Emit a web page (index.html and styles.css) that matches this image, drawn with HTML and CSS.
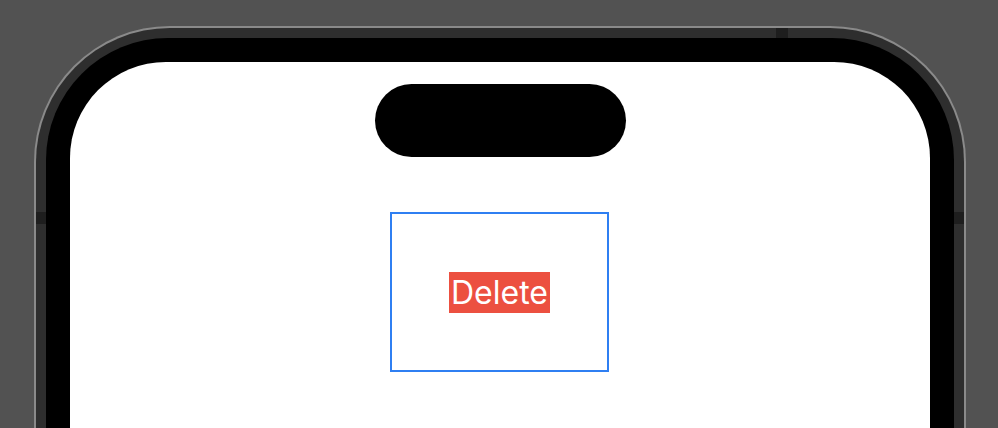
FILE: index.html
```html
<!DOCTYPE html>
<html>
<head>
<meta charset="utf-8">
<link rel="stylesheet" href="styles.css">
</head>
<body>
<div class="device">
  <span class="notch notch-top"></span>
  <span class="notch notch-left"></span>
  <span class="notch notch-right"></span>
  <div class="bezel">
    <div class="screen">
      <div class="island"></div>
      <div class="box">
        <span class="label">Delete</span>
      </div>
    </div>
  </div>
</div>
</body>
</html>
```
FILE: styles.css
```css
html, body {
  margin: 0;
  padding: 0;
}
body {
  background: #525252;
  width: 998px;
  height: 428px;
  overflow: hidden;
}
.device {
  position: relative;
  box-sizing: border-box;
  margin: 26px 0 0 34px;
  width: 932px;
  height: 402px;
  border: 2px solid #8a8a8a;
  border-bottom: none;
  padding: 10px 10px 0;
  background: #2e2e2e;
  border-radius: 136px 136px 0 0;
}
.notch {
  position: absolute;
  background: #1e1e1e;
}
.notch-top {
  left: 740px;
  top: 0;
  width: 12px;
  height: 10px;
}
.notch-left {
  left: 0;
  top: 184px;
  width: 10px;
  height: 12px;
}
.notch-right {
  right: 0;
  top: 184px;
  width: 10px;
  height: 12px;
}
.bezel {
  background: #000;
  padding: 24px 24px 0;
  height: 100%;
  box-sizing: border-box;
  border-radius: 122px 122px 0 0;
}
.screen {
  background: #fff;
  height: 100%;
  box-sizing: border-box;
  border-radius: 96px 96px 0 0;
  padding-top: 22px;
  display: flex;
  flex-direction: column;
  align-items: flex-start;
}
.island {
  margin-left: 305px;
  width: 251px;
  height: 73px;
  border-radius: 36.5px;
  background: #000;
}
.box {
  margin-top: 55px;
  margin-left: 320px;
  box-sizing: border-box;
  width: 219px;
  height: 160px;
  border: 2px solid #2f7ff2;
  display: flex;
  align-items: center;
  justify-content: center;
}
.label {
  background: #ec5040;
  color: #fff;
  font-family: Inter, "Noto Sans", sans-serif;
  font-size: 32px;
  line-height: 41px;
  padding: 0 2px;
}
```
